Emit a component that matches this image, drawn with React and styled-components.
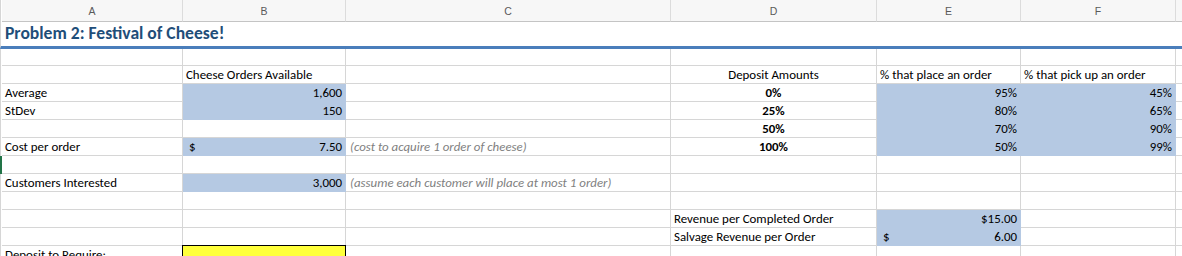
import React from "react";
import styled, { createGlobalStyle, css } from "styled-components";

const GlobalStyle = createGlobalStyle`
  html, body {
    margin: 0;
    padding: 0;
    background: #ffffff;
  }
  body {
    font-family: Carlito, Lato, "Liberation Sans", sans-serif;
    color: #000;
    overflow: hidden;
  }
`;

const GRID_LINE = "#d6d6d6";
const FILL_BLUE = "#b5c9e3";
const FILL_YELLOW = "#ffff3b";

const Sheet = styled.div`
  display: grid;
  grid-template-columns: 2px 181px 163px 325px 206px 144px 155px 1fr;
  width: 1182px;
  font-size: 12.9px;
`;

const Gutter = styled.div`
  box-sizing: border-box;
  border-left: 1px solid ${GRID_LINE};
  ${(p) =>
    p.$active &&
    css`
      border-left: none;
      background: #227447;
    `}
`;

const ColHeader = styled.div`
  box-sizing: border-box;
  height: 22px;
  display: flex;
  align-items: center;
  justify-content: center;
  background: #f7f7f7;
  border-bottom: 1px solid #c4c4c4;
  border-right: 1px solid ${(p) => (p.$last ? "#f7f7f7" : "#dcdcdc")};
  color: #5a5a5a;
  font-family: "Liberation Sans", Arial, sans-serif;
  font-size: 10.5px;
`;

const TitleCell = styled.div`
  grid-column: 2 / -1;
  box-sizing: border-box;
  height: 27px;
  display: flex;
  align-items: flex-end;
  padding: 0 0 2px 3px;
  border-bottom: 3px solid #4a7ebb;
  color: #1f4e79;
  font-weight: 700;
  font-size: 17.6px;
`;

const TitleGutter = styled(Gutter)`
  border-bottom: 3px solid #4a7ebb;
`;

const Cell = styled.div`
  box-sizing: border-box;
  height: ${(p) => p.$h}px;
  display: flex;
  align-items: flex-end;
  padding: 0 3px 0 3px;
  line-height: 16px;
  white-space: nowrap;
  overflow: visible;
  border-right: 1px solid ${GRID_LINE};
  border-bottom: 1px solid ${GRID_LINE};
  justify-content: ${(p) =>
    p.$align === "right"
      ? "flex-end"
      : p.$align === "center"
      ? "center"
      : p.$align === "split"
      ? "space-between"
      : "flex-start"};
  ${(p) =>
    p.$fill === "blue" &&
    css`
      background: ${FILL_BLUE};
      border-right-color: ${FILL_BLUE};
      border-bottom-color: ${FILL_BLUE};
    `}
  ${(p) =>
    p.$fill === "yellow" &&
    css`
      background: ${FILL_YELLOW};
      border: 1px solid #000;
      margin-left: -1px;
      margin-top: -1px;
      height: ${p.$h + 1}px;
      width: calc(100% + 1px);
    `}
  ${(p) => p.$bold && css`font-weight: 700;`}
  ${(p) =>
    p.$note &&
    css`
      font-style: italic;
      color: #7f7f7f;
      padding-left: 4px;
    `}
`;

const Dollar = styled.span`
  padding-left: 3px;
`;

const COLS = ["A", "B", "C", "D", "E", "F", ""];

const E = {};
const t = (text, opts = {}) => ({ text, ...opts });

const rows = [
  { h: 17, cells: [E, E, E, E, E, E, E] },
  {
    h: 18,
    cells: [
      E,
      t("Cheese Orders Available"),
      E,
      t("Deposit Amounts", { align: "center" }),
      t("% that place an order"),
      t("% that pick up an order"),
      E,
    ],
  },
  {
    h: 18,
    cells: [
      t("Average"),
      t("1,600", { align: "right", fill: "blue" }),
      E,
      t("0%", { align: "center", bold: true }),
      t("95%", { align: "right", fill: "blue" }),
      t("45%", { align: "right", fill: "blue" }),
      E,
    ],
  },
  {
    h: 18,
    cells: [
      t("StDev"),
      t("150", { align: "right", fill: "blue" }),
      E,
      t("25%", { align: "center", bold: true }),
      t("80%", { align: "right", fill: "blue" }),
      t("65%", { align: "right", fill: "blue" }),
      E,
    ],
  },
  {
    h: 18,
    cells: [
      E,
      E,
      E,
      t("50%", { align: "center", bold: true }),
      t("70%", { align: "right", fill: "blue" }),
      t("90%", { align: "right", fill: "blue" }),
      E,
    ],
  },
  {
    h: 18,
    cells: [
      t("Cost per order"),
      t("7.50", { align: "split", fill: "blue", dollar: true }),
      t("(cost to acquire 1 order of cheese)", { note: true }),
      t("100%", { align: "center", bold: true }),
      t("50%", { align: "right", fill: "blue" }),
      t("99%", { align: "right", fill: "blue" }),
      E,
    ],
  },
  { h: 18, active: true, cells: [E, E, E, E, E, E, E] },
  {
    h: 18,
    cells: [
      t("Customers Interested"),
      t("3,000", { align: "right", fill: "blue" }),
      t("(assume each customer will place at most 1 order)", { note: true }),
      E,
      E,
      E,
      E,
    ],
  },
  { h: 18, cells: [E, E, E, E, E, E, E] },
  {
    h: 18,
    cells: [
      E,
      E,
      E,
      t("Revenue per Completed Order"),
      t("$15.00", { align: "right", fill: "blue" }),
      E,
      E,
    ],
  },
  {
    h: 18,
    cells: [
      E,
      E,
      E,
      t("Salvage Revenue per Order"),
      t("6.00", { align: "split", fill: "blue", dollar: true }),
      E,
      E,
    ],
  },
  {
    h: 18,
    cells: [t("Deposit to Require:"), t("", { fill: "yellow" }), E, E, E, E, E],
  },
];

export default function App() {
  return (
    <>
      <GlobalStyle />
      <Sheet>
        <Gutter />
        {COLS.map((c, i) => (
          <ColHeader key={c || "g"} $last={i === COLS.length - 1}>
            {c}
          </ColHeader>
        ))}
        <TitleGutter />
        <TitleCell>Problem 2: Festival of Cheese!</TitleCell>
        {rows.map((row, ri) => (
          <React.Fragment key={ri}>
            <Gutter $active={row.active} />
            {row.cells.map((cell, ci) => (
              <Cell
                key={ci}
                $h={row.h}
                $align={cell.align}
                $fill={cell.fill}
                $bold={cell.bold}
                $note={cell.note}
              >
                {cell.dollar && <Dollar>$</Dollar>}
                {cell.text ? <span>{cell.text}</span> : null}
              </Cell>
            ))}
          </React.Fragment>
        ))}
      </Sheet>
    </>
  );
}
